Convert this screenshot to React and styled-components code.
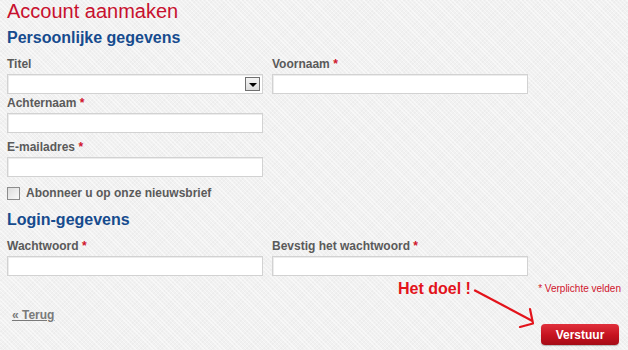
import React from "react";
import styled, { createGlobalStyle } from "styled-components";

const GlobalStyle = createGlobalStyle`
  html, body {
    margin: 0;
    padding: 0;
  }
  body {
    width: 628px;
    height: 350px;
    overflow: hidden;
    font-family: "Liberation Sans", Arial, sans-serif;
    background-color: #f1f1f1;
    background-image:
      repeating-linear-gradient(45deg, rgba(255,255,255,0.5) 0 1px, transparent 1px 3px),
      repeating-linear-gradient(-45deg, rgba(0,0,0,0.02) 0 1px, transparent 1px 3px);
  }
`;

const Page = styled.div`
  padding: 0 7px;
  display: flex;
  flex-direction: column;
`;

const Title = styled.h1`
  margin: 0;
  font-size: 20px;
  font-weight: normal;
  line-height: 23px;
  color: #c8102e;
`;

const SectionTitle = styled.h2`
  margin: ${(p) => p.$top || 6}px 0 0;
  font-size: 16px;
  line-height: 20px;
  font-weight: bold;
  color: #164b8e;
`;

const Grid = styled.div`
  display: grid;
  grid-template-columns: 256px 256px;
  column-gap: 9px;
  margin-top: ${(p) => p.$top || 0}px;
`;

const Field = styled.div`
  display: flex;
  flex-direction: column;
  margin-top: ${(p) => p.$top || 0}px;
`;

const Label = styled.label`
  font-size: 12px;
  font-weight: bold;
  color: #5a5a5a;
  line-height: 14px;
  height: 14px;
  margin-bottom: 3px;
`;

const Star = styled.span`
  color: #d0142c;
`;

const Input = styled.div`
  box-sizing: border-box;
  height: 20px;
  background: #fff;
  border: 1px solid #d2d2d2;
  box-shadow: inset 1px 1px 0 #ececec;
`;

const Select = styled(Input)`
  display: flex;
  justify-content: flex-end;
  align-items: center;
  padding-right: 2px;
`;

const SelectButton = styled.div`
  box-sizing: border-box;
  width: 15px;
  height: 14px;
  border: 1px solid #6f6f6f;
  background: linear-gradient(#f4f4f4, #dcdcdc);
  display: flex;
  align-items: center;
  justify-content: center;
  &::after {
    content: "";
    border-left: 4px solid transparent;
    border-right: 4px solid transparent;
    border-top: 4px solid #000;
    margin-top: 1px;
  }
`;

const CheckRow = styled.label`
  display: flex;
  align-items: center;
  gap: 6px;
  margin-top: 9px;
  font-size: 12px;
  font-weight: bold;
  color: #5a5a5a;
  line-height: 14px;
`;

const CheckBox = styled.span`
  box-sizing: border-box;
  width: 13px;
  height: 13px;
  border: 1px solid #8c8c8c;
  background: linear-gradient(135deg, #dcdcdc, #fafafa);
`;

const Footer = styled.div`
  position: relative;
  display: flex;
  justify-content: space-between;
  align-items: flex-start;
  margin-top: 7px;
  height: 67px;
`;

const BackLink = styled.a`
  margin: 25px 0 0 5px;
  font-size: 12px;
  font-weight: bold;
  color: #7a7a7a;
  text-decoration: underline;
  line-height: 14px;
`;

const RightCol = styled.div`
  display: flex;
  flex-direction: column;
  align-items: flex-end;
`;

const Required = styled.div`
  font-size: 10px;
  color: #d0142c;
  line-height: 12px;
`;

const SubmitButton = styled.button`
  margin-top: 29px;
  margin-right: 2px;
  width: 78px;
  height: 21px;
  border: none;
  border-radius: 4px;
  background: linear-gradient(#e0303c, #c5121f 55%, #a50c17);
  box-shadow: 0 1px 1px rgba(0, 0, 0, 0.25);
  color: #fff;
  font-family: "Liberation Sans", Arial, sans-serif;
  font-size: 12px;
  font-weight: bold;
  padding: 0;
`;

const Annotation = styled.div`
  position: absolute;
  left: 391px;
  top: -3px;
  font-size: 16px;
  font-weight: bold;
  color: #e3131b;
  line-height: 18px;
`;

const Arrow = styled.svg`
  position: absolute;
  left: 458px;
  top: 0;
`;

export default function App() {
  return (
    <>
      <GlobalStyle />
      <Page>
        <Title>Account aanmaken</Title>
        <SectionTitle $top={5}>Persoonlijke gegevens</SectionTitle>
        <Grid $top={9}>
          <Field>
            <Label>Titel</Label>
            <Select>
              <SelectButton />
            </Select>
          </Field>
          <Field>
            <Label>
              Voornaam <Star>*</Star>
            </Label>
            <Input />
          </Field>
          <Field $top={2}>
            <Label>
              Achternaam <Star>*</Star>
            </Label>
            <Input />
          </Field>
          <div />
          <Field $top={7}>
            <Label>
              E-mailadres <Star>*</Star>
            </Label>
            <Input />
          </Field>
        </Grid>
        <CheckRow>
          <CheckBox />
          Abonneer u op onze nieuwsbrief
        </CheckRow>
        <SectionTitle $top={10}>Login-gegevens</SectionTitle>
        <Grid $top={9}>
          <Field>
            <Label>
              Wachtwoord <Star>*</Star>
            </Label>
            <Input />
          </Field>
          <Field>
            <Label>
              Bevstig het wachtwoord <Star>*</Star>
            </Label>
            <Input />
          </Field>
        </Grid>
        <Footer>
          <BackLink href="#">« Terug</BackLink>
          <RightCol>
            <Required>* Verplichte velden</Required>
            <SubmitButton>Verstuur</SubmitButton>
          </RightCol>
          <Annotation>Het doel !</Annotation>
          <Arrow width="80" height="48" viewBox="0 0 80 48">
            <g stroke="#e3131b" strokeWidth="2.2" fill="none" strokeLinecap="round" strokeLinejoin="round">
              <path d="M10 7.5 L66.5 37.5" />
              <path d="M65 26 L68 40.5 L55 44" />
            </g>
          </Arrow>
        </Footer>
      </Page>
    </>
  );
}
